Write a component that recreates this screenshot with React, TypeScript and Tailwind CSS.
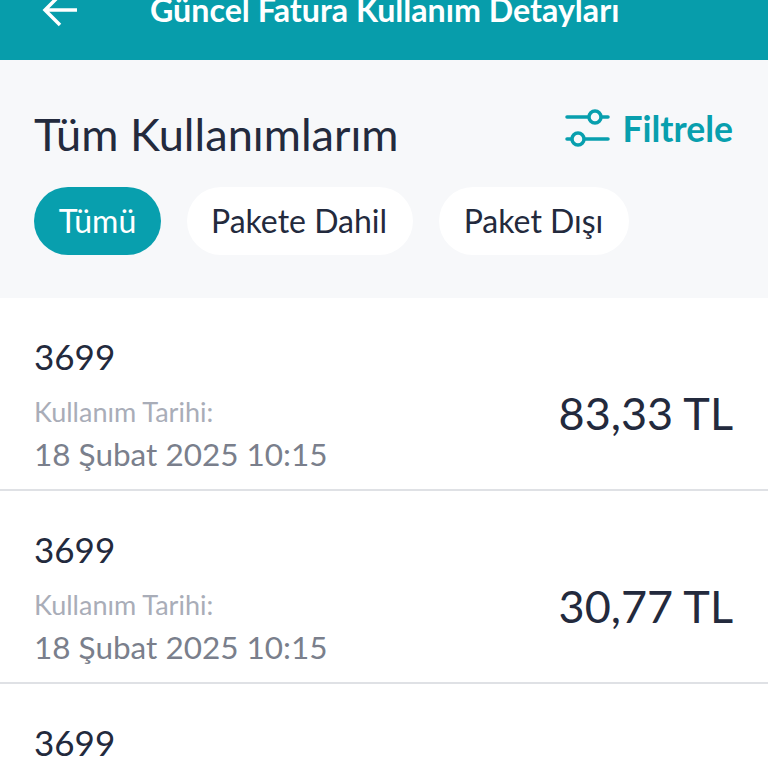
import React from "react";

const rows = [
  { id: 1, amount: "83,33 TL" },
  { id: 2, amount: "30,77 TL" },
];

const Filter = () => (
  <svg width="46" height="40" viewBox="0 0 46 40" fill="none" stroke="#089fae" strokeWidth="3.5" strokeLinecap="round">
    <path d="M2 8H23M37 8H43M2 30H6M20 30H43" />
    <circle cx="30" cy="8" r="6" />
    <circle cx="13" cy="30" r="6" />
  </svg>
);

export default function App() {
  return (
    <div className="w-[768px] h-[768px] overflow-hidden bg-white font-['Lato',sans-serif] text-[#232a3d]">
      <header className="h-[60px] bg-[#079dab] flex items-start text-white pl-[42px]">
        <svg width="36" height="36" viewBox="0 0 36 36" fill="none" stroke="white" strokeWidth="3.5" className="mt-[-8px]">
          <path d="M35 18H3M18 3L3 18L18 33" />
        </svg>
        <div className="ml-[72px] mt-[-10px] text-[32.2px] leading-[40px] font-bold">Güncel Fatura Kullanım Detayları</div>
      </header>
      <section className="h-[238px] bg-[#f7f8fa] px-[34px] pt-[46px]">
        <div className="flex justify-between items-center h-[56px]">
          <div className="text-[45.2px] leading-[56px]">Tüm Kullanımlarım</div>
          <div className="flex items-center gap-[11px] text-[#089fae] text-[35.5px] font-bold mb-[10px] pr-[1px]">
            <Filter />
            <span>Filtrele</span>
          </div>
        </div>
        <div className="flex gap-[26px] mt-[25px] text-[32px]">
          <div className="h-[68px] w-[127px] rounded-full bg-[#089fae] text-white flex items-center justify-center">Tümü</div>
          <div className="h-[68px] w-[226px] rounded-full bg-white flex items-center justify-center pr-[2px]">Pakete Dahil</div>
          <div className="h-[68px] w-[190px] rounded-full bg-white flex items-center justify-center pr-[1px]">Paket Dışı</div>
        </div>
      </section>
      {rows.map((row) => (
        <div key={row.id} className="h-[193px] px-[34px] pt-[34px] border-b-2 border-[#dfe1e5] flex justify-between">
          <div>
            <div className="text-[35px] leading-[48px]">3699</div>
            <div className="text-[27px] leading-[36px] text-[#a9adb8] mt-[14px]">Kullanım Tarihi:</div>
            <div className="text-[31.5px] leading-[44px] text-[#7a7f8c] mt-[2px]">18 Şubat 2025 10:15</div>
          </div>
          <div className="text-[45px] leading-[60px] mt-[51px] pr-[1px]">{row.amount}</div>
        </div>
      ))}
      <div className="px-[34px] pt-[34px]">
        <div className="text-[35px] leading-[48px]">3699</div>
      </div>
    </div>
  );
}
